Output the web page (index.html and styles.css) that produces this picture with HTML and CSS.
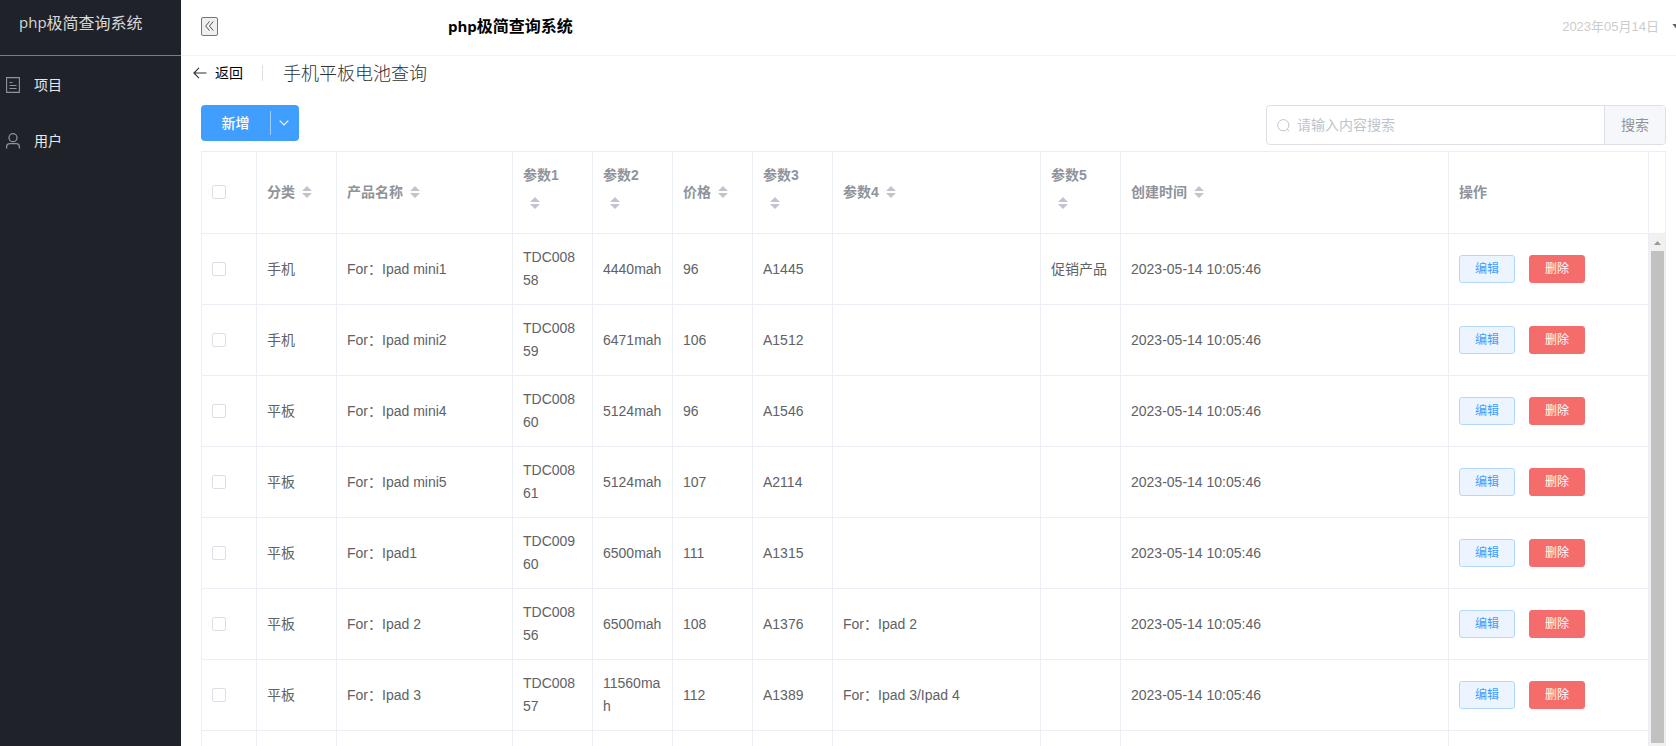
FILE: index.html
```html
<!DOCTYPE html>
<html lang="zh-CN">
<head>
<meta charset="utf-8">
<title>php极简查询系统</title>
<link rel="stylesheet" href="styles.css">
</head>
<body>
<svg width="0" height="0" class="defs">
  <symbol id="caret" viewBox="0 0 24 34"><path d="M7 15l5-5 5 5zM7 17h10l-5 5z" fill="#c0c4cc"/></symbol>
</svg>
<div class="app">
  <aside class="sidebar">
    <div class="brand"><span class="latin">php</span>极简查询系统</div>
    <nav class="menu">
      <a class="menu-item"><svg width="14" height="16" viewBox="0 0 14 16"><path d="M.6.6h12.8v14.8H.6zM3.500 5.500h3M3.500 8.500h7M3.500 11.500h7" fill="none" stroke="#909399" stroke-width="1.100"/></svg><span>项目</span></a>
      <a class="menu-item"><svg width="14" height="16" viewBox="0 0 14 16"><circle cx="7" cy="4.700" r="4" fill="none" stroke="#909399" stroke-width="1.300"/><path d="M.6 15.500v-1.500q0-3.300 3.300-3.300h6.200q3.300 0 3.300 3.300v1.500" fill="none" stroke="#909399" stroke-width="1.300"/></svg><span>用户</span></a>
    </nav>
  </aside>
  <main class="main">
    <header class="topbar">
      <button class="fold"><svg width="9" height="10" viewBox="0 0 9 10"><path d="M4.500.4L.7 5l3.800 4.600M8.300.4L4.500 5l3.800 4.600" fill="none" stroke="#444" stroke-width=".9"/></svg></button>
      <h1 class="title"><span class="latin">php</span>极简查询系统</h1>
      <span class="date">2023年05月14日</span>
      <i class="drop"></i>
    </header>
    <div class="page-header">
      <svg class="arrow" width="14" height="12" viewBox="0 0 14 12"><path d="M13.500 6H1M6 .8L.9 6 6 11.200" fill="none" stroke="#303133" stroke-width="1.100"/></svg>
      <span class="back">返回</span>
      <span class="content">手机平板电池查询</span>
    </div>
    <div class="toolbar">
      <div class="add"><span class="add-label">新增</span><span class="add-drop"><svg width="10" height="6" viewBox="0 0 10 6"><path d="M.7.7L5 5 9.300.7" fill="none" stroke="#fff" stroke-width="1.100"/></svg></span></div>
      <div class="search">
        <div class="search-input"><svg width="13" height="13" viewBox="0 0 13 13"><circle cx="6.300" cy="6.200" r="5.600" fill="none" stroke="#c0c4cc"/><path d="M10.300 10.300l2 2" stroke="#c0c4cc"/></svg><span>请输入内容搜索</span></div>
        <div class="search-btn">搜索</div>
      </div>
    </div>
    <div class="table-wrap">
      <div class="head-row">
        <table class="grid">
          <colgroup><col class="w55"><col class="w80"><col class="w176"><col class="w80"><col class="w80"><col class="w80"><col class="w80"><col class="w208"><col class="w80"><col class="w328"><col class="w200"></colgroup>
          <tr>
            <th><i class="check"></i></th>
            <th>分类<svg class="caret"><use href="#caret"/></svg></th>
            <th>产品名称<svg class="caret"><use href="#caret"/></svg></th>
            <th>参数1 <svg class="caret"><use href="#caret"/></svg></th>
            <th>参数2 <svg class="caret"><use href="#caret"/></svg></th>
            <th>价格<svg class="caret"><use href="#caret"/></svg></th>
            <th>参数3 <svg class="caret"><use href="#caret"/></svg></th>
            <th>参数4<svg class="caret"><use href="#caret"/></svg></th>
            <th>参数5 <svg class="caret"><use href="#caret"/></svg></th>
            <th>创建时间<svg class="caret"><use href="#caret"/></svg></th>
            <th>操作</th>
          </tr>
        </table>
        <div class="gutter"></div>
      </div>
      <div class="body-row">
        <table class="grid">
          <colgroup><col class="w55"><col class="w80"><col class="w176"><col class="w80"><col class="w80"><col class="w80"><col class="w80"><col class="w208"><col class="w80"><col class="w328"><col class="w200"></colgroup>
          <tr><td><i class="check"></i></td><td>手机</td><td>For：Ipad mini1</td><td>TDC00858</td><td>4440mah</td><td>96</td><td>A1445</td><td></td><td>促销产品</td><td>2023-05-14 10:05:46</td><td><div class="ops"><span class="btn edit">编辑</span><span class="btn del">删除</span></div></td></tr>
          <tr><td><i class="check"></i></td><td>手机</td><td>For：Ipad mini2</td><td>TDC00859</td><td>6471mah</td><td>106</td><td>A1512</td><td></td><td></td><td>2023-05-14 10:05:46</td><td><div class="ops"><span class="btn edit">编辑</span><span class="btn del">删除</span></div></td></tr>
          <tr><td><i class="check"></i></td><td>平板</td><td>For：Ipad mini4</td><td>TDC00860</td><td>5124mah</td><td>96</td><td>A1546</td><td></td><td></td><td>2023-05-14 10:05:46</td><td><div class="ops"><span class="btn edit">编辑</span><span class="btn del">删除</span></div></td></tr>
          <tr><td><i class="check"></i></td><td>平板</td><td>For：Ipad mini5</td><td>TDC00861</td><td>5124mah</td><td>107</td><td>A2114</td><td></td><td></td><td>2023-05-14 10:05:46</td><td><div class="ops"><span class="btn edit">编辑</span><span class="btn del">删除</span></div></td></tr>
          <tr><td><i class="check"></i></td><td>平板</td><td>For：Ipad1</td><td>TDC00960</td><td>6500mah</td><td>111</td><td>A1315</td><td></td><td></td><td>2023-05-14 10:05:46</td><td><div class="ops"><span class="btn edit">编辑</span><span class="btn del">删除</span></div></td></tr>
          <tr><td><i class="check"></i></td><td>平板</td><td>For：Ipad 2</td><td>TDC00856</td><td>6500mah</td><td>108</td><td>A1376</td><td>For：Ipad 2</td><td></td><td>2023-05-14 10:05:46</td><td><div class="ops"><span class="btn edit">编辑</span><span class="btn del">删除</span></div></td></tr>
          <tr><td><i class="check"></i></td><td>平板</td><td>For：Ipad 3</td><td>TDC00857</td><td>11560mah</td><td>112</td><td>A1389</td><td>For：Ipad 3/Ipad 4</td><td></td><td>2023-05-14 10:05:46</td><td><div class="ops"><span class="btn edit">编辑</span><span class="btn del">删除</span></div></td></tr>
          <tr><td></td><td></td><td></td><td></td><td></td><td></td><td></td><td></td><td></td><td></td><td></td></tr>
        </table>
        <div class="scrollbar"><i class="up"></i><div class="thumb"></div></div>
      </div>
    </div>
  </main>
</div>
</body>
</html>
```

FILE: styles.css
```css
* { box-sizing: border-box; }
body { margin: 0; font-family: "Liberation Sans", "Noto Sans CJK SC", sans-serif; font-size: 14px; color: #606266; background: #fff; overflow: hidden; }
svg { display: block; flex: none; }
.defs { position: absolute; }
.app { display: flex; height: 746px; }
.sidebar { width: 181px; flex: none; background: #20222a; color: #d8d8d8; }
.brand { height: 56px; border-bottom: 1px solid #7c7d81; padding: 0 0 11px 19px; display: flex; align-items: center; font-family: "Open Sans", "Noto Sans CJK SC", sans-serif; font-size: 16px; white-space: nowrap; }
.latin { font-size: 15px; }
.menu-item { display: flex; align-items: center; height: 56px; padding: 2px 0 0 6px; gap: 14px; color: #e8e8e8; }
.menu-item span { padding-bottom: 2px; }
.main { flex: 1; min-width: 0; display: flex; flex-direction: column; }
.topbar { height: 56px; flex: none; border-bottom: 1px solid #f3f3f5; display: flex; align-items: center; padding-left: 20px; overflow: hidden; }
.fold { width: 17px; height: 19px; margin-top: -3px; padding: 0; border: 1px solid #767676; border-radius: 2px; background: #efefef; display: flex; align-items: center; justify-content: center; }
.title { margin: 0 0 5px 230px; color: #000; font: bold 16px "Open Sans", "Noto Sans CJK SC", sans-serif; white-space: nowrap; width: 135px; }
.date { margin: 0 13px 4px auto; color: #ccc; font-size: 13px; white-space: nowrap; }
.drop { width: 4px; height: 5px; margin-bottom: 3px; background: #606266; clip-path: polygon(0 0, 100% 0, 100% 100%); }
.page-header { height: 34px; flex: none; display: flex; align-items: center; padding-left: 12px; color: #000; white-space: nowrap; }
.page-header .back { padding: 0 19px 0 8px; border-right: 1px solid #dcdfe6; line-height: 16px; }
.page-header .content { margin: 0 0 3px 20px; color: #303133; font-size: 18px; font-weight: 300; }
.toolbar { display: flex; justify-content: space-between; height: 61px; flex: none; padding: 15px 10px 0 20px; }
.add { width: 98px; height: 36px; border-radius: 4px; background: #409eff; color: #fff; display: flex; align-items: center; font-weight: 500; }
.add-label { width: 69px; text-align: center; padding: 0 0 3px 0; }
.add-drop { height: 24px; border-left: 1px solid rgba(255,255,255,.5); padding-left: 8px; display: flex; align-items: center; }
.search { width: 400px; height: 40px; border: 1px solid #dcdfe6; border-radius: 4px; display: flex; overflow: hidden; }
.search-input { flex: 1; display: flex; align-items: center; gap: 7px; padding-left: 10px; color: #c0c4cc; }
.search-input span { padding-bottom: 2px; }
.search-btn { width: 61px; border-left: 1px solid #dcdfe6; background: #f5f7fa; color: #909399; display: flex; align-items: center; justify-content: center; padding-bottom: 2px; }
.table-wrap { flex: 1; min-height: 0; margin: 0 10px 0 20px; border: 1px solid #ebeef5; border-bottom: 0; overflow: hidden; }
.head-row, .body-row { display: flex; }
.gutter { flex: 1; border-bottom: 1px solid #ebeef5; }
.grid { width: 1447px; flex: none; table-layout: fixed; border-collapse: separate; border-spacing: 0; line-height: 23px; }
.w55 { width: 55px; } .w80 { width: 80px; } .w176 { width: 176px; } .w200 { width: 200px; } .w208 { width: 208px; } .w328 { width: 328px; }
th, td { padding: 0 10px; border-right: 1px solid #ebeef5; border-bottom: 1px solid #ebeef5; text-align: left; vertical-align: middle; word-break: break-all; }
th { height: 82px; color: #909399; font-weight: bold; word-break: normal; }
td { height: 71px; }
.caret { display: inline-block; width: 24px; height: 34px; vertical-align: middle; }
.check { display: block; width: 14px; height: 14px; border: 1px solid #dcdfe6; border-radius: 2px; }
th .check { margin-bottom: 2px; }
.ops { display: flex; gap: 14px; }
.btn { width: 56px; height: 28px; border: 1px solid #b3d8ff; border-radius: 3px; font-size: 12px; line-height: 26px; text-align: center; }
.edit { background: #ecf5ff; color: #409eff; }
.del { background: #f56c6c; border-color: #f56c6c; color: #fff; }
.scrollbar { flex: 1; height: 512px; background: #f1f1f1; display: flex; flex-direction: column; padding: 7px 1px 0 2px; }
.up { width: 7px; height: 4px; margin: 0 0 6px 3px; background: #999; clip-path: polygon(50% 0, 100% 100%, 0 100%); }
.thumb { height: 492px; background: #c1c1c1; }
```
